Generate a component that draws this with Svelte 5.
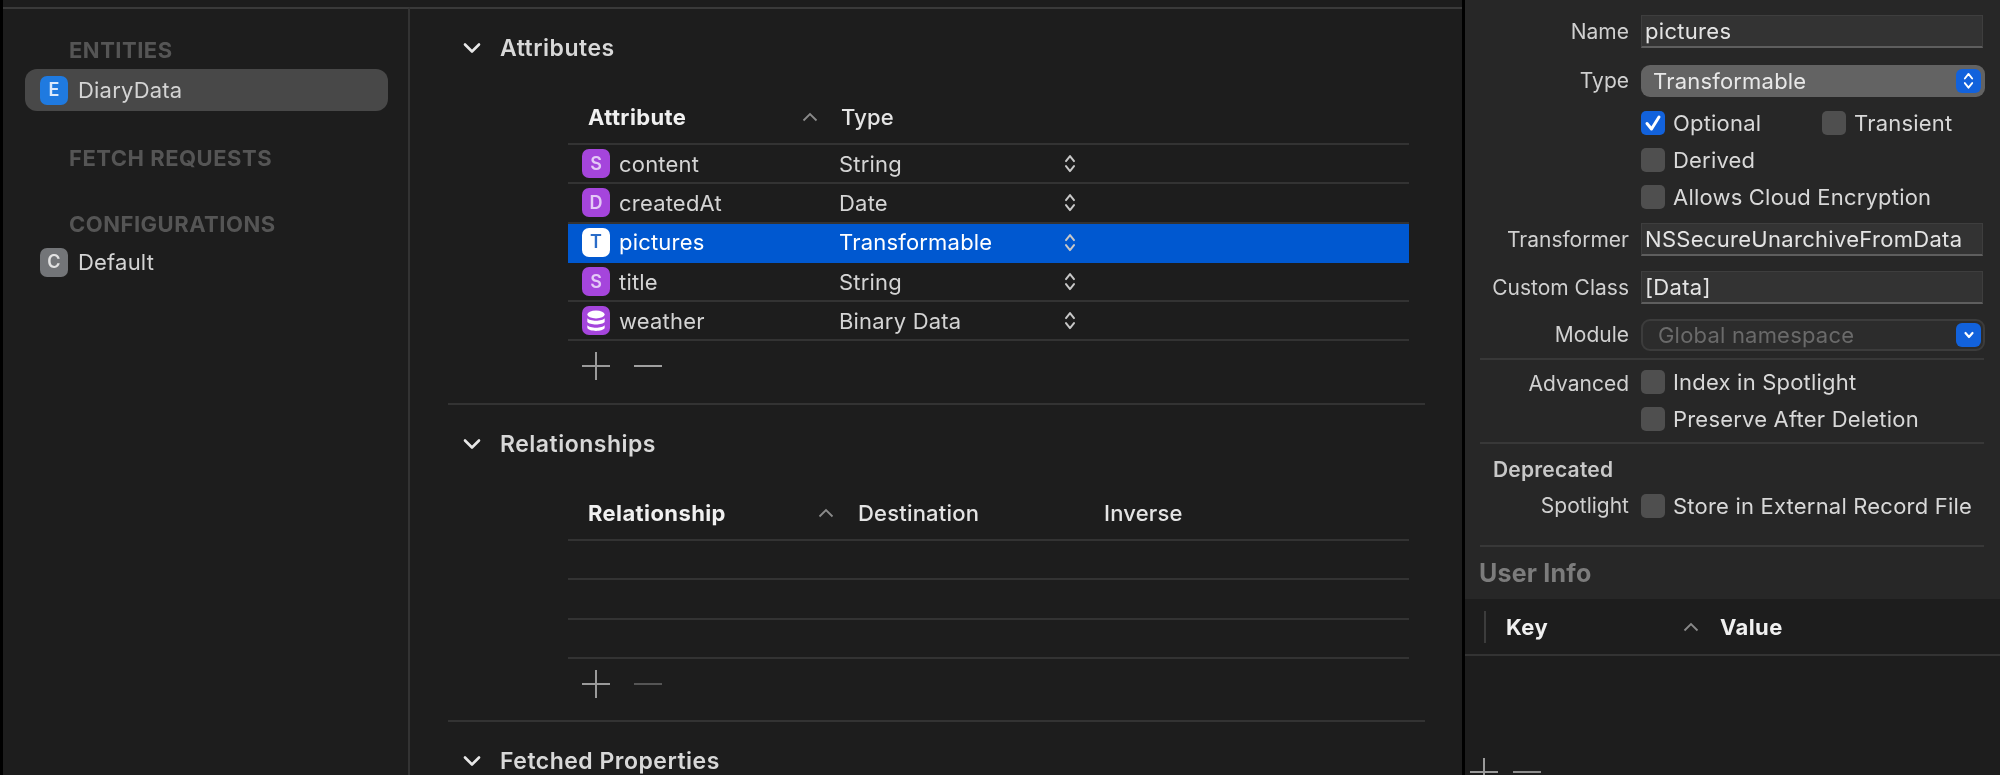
<script>
  const attributes = [
    { letter: 'S', name: 'content', type: 'String' },
    { letter: 'D', name: 'createdAt', type: 'Date' },
    { letter: 'T', name: 'pictures', type: 'Transformable', selected: true },
    { letter: 'S', name: 'title', type: 'String' },
    { letter: 'db', name: 'weather', type: 'Binary Data' }
  ];
</script>

{#snippet chevron()}
  <svg class="chevron" width="18" height="12" viewBox="0 0 18 12">
    <path d="M2 2.5 L9 9.5 L16 2.5" fill="none" stroke="#e8e8e8" stroke-width="2.6" stroke-linecap="round" stroke-linejoin="round" />
  </svg>
{/snippet}

{#snippet caret()}
  <svg width="16" height="10" viewBox="0 0 16 10">
    <path d="M1.5 8.5 L8 2 L14.5 8.5" fill="none" stroke="#8a8a8a" stroke-width="1.8" />
  </svg>
{/snippet}

{#snippet stepper(color = '#c8c8c8', size = 12)}
  <svg class="stepper" width={size} height={size * 1.6} viewBox="0 0 12 19">
    <path d="M2 7 L6 2 L10 7 M2 12 L6 17 L10 12" fill="none" stroke={color} stroke-width="2" stroke-linecap="round" stroke-linejoin="round" />
  </svg>
{/snippet}

{#snippet plusMinus(minusColor = '#8d8d8d')}
  <div class="plusminus">
    <svg width="28" height="28" viewBox="0 0 28 28">
      <path d="M0 14 H28 M14 0 V28" stroke="#9a9a9a" stroke-width="2" />
    </svg>
    <svg width="28" height="28" viewBox="0 0 28 28">
      <path d="M0 14 H28" stroke={minusColor} stroke-width="2" />
    </svg>
  </div>
{/snippet}

{#snippet checkbox(label, checked = false)}
  <div class="check">
    <span class="box" class:on={checked}>
      {#if checked}
        <svg width="24" height="24" viewBox="0 0 24 24">
          <path d="M6 12.5 L10.5 18 L18 6" fill="none" stroke="#fff" stroke-width="3" stroke-linecap="round" stroke-linejoin="round" />
        </svg>
      {/if}
    </span>
    <span>{label}</span>
  </div>
{/snippet}

<div class="window">
  <aside class="sidebar">
    <h3 class="group first">ENTITIES</h3>
    <div class="item active"><span class="badge blue">E</span>DiaryData</div>
    <h3 class="group fetch">FETCH REQUESTS</h3>
    <h3 class="group conf">CONFIGURATIONS</h3>
    <div class="item"><span class="badge grey">C</span>Default</div>
  </aside>

  <main class="editor">
    <section class="sec">
      <div class="sec-title">{@render chevron()}Attributes</div>
      <div class="table">
        <div class="head attr-cols">
          <span class="strong">Attribute</span>
          <span class="caret">{@render caret()}</span>
          <span>Type</span>
        </div>
        {#each attributes as a}
          <div class="row attr-cols" class:selected={a.selected}>
            <span class="cell-name">
              <span class="badge purple">
                {#if a.letter === 'db'}
                  <svg width="22" height="26" viewBox="0 0 20 24">
                    <ellipse cx="10" cy="6" rx="8" ry="3.6" fill="#fff" />
                    <path d="M2 9.5 C4 12.5 16 12.5 18 9.5 V13 C16 16 4 16 2 13 Z M2 16 C4 19 16 19 18 16 V18.5 C16 22 4 22 2 18.5 Z" fill="#fff" />
                  </svg>
                {:else}
                  {a.letter}
                {/if}
              </span>
              {a.name}
            </span>
            <span></span>
            <span class="cell-type">{a.type}{@render stepper()}</span>
          </div>
        {/each}
        {@render plusMinus('#a0a0a0')}
      </div>
    </section>

    <section class="sec">
      <div class="sec-title">{@render chevron()}Relationships</div>
      <div class="table">
        <div class="head rel-cols">
          <span class="strong">Relationship</span>
          <span class="caret">{@render caret()}</span>
          <span>Destination</span>
          <span>Inverse</span>
        </div>
        <div class="row"></div>
        <div class="row"></div>
        <div class="row"></div>
        {@render plusMinus('#555')}
      </div>
    </section>

    <section class="sec last">
      <div class="sec-title">{@render chevron()}Fetched Properties</div>
    </section>
  </main>

  <aside class="inspector">
    <div class="form">
      <div class="line name-line"><label for="n">Name</label><div id="n" class="field">pictures</div></div>
      <div class="line type-line">
        <span class="lab">Type</span>
        <div class="popup">Transformable<span class="popbtn">{@render stepper('#fff', 11)}</span></div>
      </div>
      <div class="line opts">
        <span class="lab"></span>
        <div class="checks">
          <div class="two">
            {@render checkbox('Optional', true)}
            {@render checkbox('Transient')}
          </div>
          {@render checkbox('Derived')}
          {@render checkbox('Allows Cloud Encryption')}
        </div>
      </div>
      <div class="line tf"><span class="lab">Transformer</span><div class="field">NSSecureUnarchiveFromData</div></div>
      <div class="line cc"><span class="lab">Custom Class</span><div class="field">[Data]</div></div>
      <div class="line mod">
        <span class="lab">Module</span>
        <div class="popup off">Global namespace
          <span class="popbtn">
            <svg width="12" height="10" viewBox="0 0 12 10"><path d="M2.5 3 L6 7 L9.5 3" fill="none" stroke="#fff" stroke-width="2.2" stroke-linecap="round" stroke-linejoin="round" /></svg>
          </span>
        </div>
      </div>
    </div>

    <div class="rule rule-a"></div>
    <div class="line adv">
      <span class="lab">Advanced</span>
      <div class="checks">
        {@render checkbox('Index in Spotlight')}
        {@render checkbox('Preserve After Deletion')}
      </div>
    </div>
    <div class="rule rule-b"></div>
    <div class="depr">Deprecated</div>
    <div class="line spot">
      <span class="lab">Spotlight</span>
      {@render checkbox('Store in External Record File')}
    </div>
    <div class="rule rule-c"></div>
    <div class="userinfo">User Info</div>

    <div class="kv">
      <div class="kv-head">
        <span class="kv-bar"></span>
        <span class="strong key">Key</span>
        <span class="caret">{@render caret()}</span>
        <span class="strong">Value</span>
      </div>
      <div class="kv-tools">
        <svg width="28" height="28" viewBox="0 0 28 28"><path d="M0 14 H28 M14 0 V28" stroke="#9a9a9a" stroke-width="2" /></svg>
        <svg width="28" height="28" viewBox="0 0 28 28"><path d="M0 14 H28" stroke="#8d8d8d" stroke-width="2" /></svg>
      </div>
    </div>
  </aside>
</div>

<style>
  :global(body) {
    margin: 0;
    background: #1d1d1d;
  }

  .window {
    display: flex;
    width: 2000px;
    height: 775px;
    overflow: hidden;
    box-sizing: border-box;
    border-left: 3px solid #000;
    background: #1d1d1d;
    color: #d4d4d4;
    font-family: Inter, "Liberation Sans", sans-serif;
    font-size: 22px;
    letter-spacing: 0.2px;
    line-height: 28px;
    filter: blur(0.4px);
  }

  .sidebar {
    width: 407px;
    flex: none;
    box-sizing: border-box;
    border-top: 2px solid #3a3a3a;
    margin-top: 7px;
    border-right: 2px solid #333;
    padding: 0 20px 0 22px;
  }

  .group {
    margin: 0 0 0 44px;
    font-size: 22px;
    letter-spacing: 0.5px;
    line-height: 28px;
    font-weight: 700;
    color: #555;
  }
  .first { margin-top: 27px; }
  .fetch { margin-top: 33px; }
  .conf { margin-top: 38px; }
  .conf + .item { margin-top: 3px; }

  .item {
    display: flex;
    align-items: center;
    gap: 10px;
    height: 42px;
    padding-left: 15px;
    border-radius: 12px;
  }
  .item.active {
    background: #484848;
    margin-top: 5px;
  }

  .badge {
    display: flex;
    align-items: center;
    justify-content: center;
    width: 28px;
    height: 29px;
    flex: none;
    border-radius: 7px;
    font-size: 18px;
    font-weight: 600;
    letter-spacing: 0;
  }
  .blue { background: #1f7ae0; color: #dbe9fb; }
  .grey { background: #737578; color: #e2e2e2; }
  .purple { background: #a545dc; color: #e4c9f6; }

  .editor {
    width: 1054px;
    flex: none;
    box-sizing: border-box;
    border-top: 2px solid #3a3a3a;
    margin-top: 7px;
    padding: 0 39px 0 38px;
  }

  .sec {
    border-bottom: 2px solid #333;
    height: 317px;
    box-sizing: border-box;
    padding-top: 1px;
  }
  .sec:first-child {
    height: 396px;
    padding-top: 25px;
  }
  .sec.last { border: 0; }

  .sec-title {
    display: flex;
    align-items: center;
    gap: 19px;
    height: 28px;
    margin-top: 24px;
    padding-left: 15px;
    font-size: 23px;
    letter-spacing: 0.5px;
    font-weight: 600;
    color: #d8d8d8;
  }
  .sec:first-child .sec-title { margin-top: 0; }

  .table {
    margin: 39px 16px 0 120px;
  }
  .head {
    height: 42px;
    box-sizing: content-box;
    border-bottom: 2px solid #333;
    color: #e4e4e4;
    font-weight: 500;
  }
  .head > span {
    padding-bottom: 10px;
  }
  .strong {
    font-weight: 700;
    color: #f0f0f0;
    letter-spacing: 0.4px;
  }

  .attr-cols {
    display: grid;
    grid-template-columns: 237px 34px 1fr;
    align-items: center;
  }
  .head.attr-cols { padding-left: 20px; grid-template-columns: 214px 39px 1fr; }
  .rel-cols {
    display: grid;
    grid-template-columns: 230px 40px 246px 1fr;
    align-items: center;
    padding-left: 20px;
  }

  .row {
    height: 37.3px;
    border-bottom: 2px solid #333;
  }
  .row.selected {
    background: #0058d0;
    border-bottom-color: #0058d0;
    color: #fff;
  }
  .row.selected .badge {
    background: #fff;
    color: #2a6cc8;
  }

  .cell-name {
    display: flex;
    align-items: center;
    gap: 9px;
    padding-left: 14px;
  }
  .cell-type {
    display: flex;
    align-items: center;
    justify-content: space-between;
    width: 237px;
  }

  .caret {
    display: flex;
    align-items: center;
    justify-content: flex-start;
  }

  .plusminus {
    display: flex;
    gap: 24px;
    padding: 11px 0 0 14px;
  }

  .inspector {
    flex: 1;
    background: #272727;
    border-left: 3px solid #000;
    margin-left: -2px;
    display: flex;
    flex-direction: column;
    color: #d8d8d8;
    min-width: 0;
    overflow: hidden;
  }
  .inspector > * {
    flex: none;
  }

  .form {
    padding-top: 15px;
  }

  .line {
    display: flex;
    padding-right: 15px;
    align-items: center;
  }
  .lab, label {
    width: 164px;
    flex: none;
    margin-right: 12px;
    text-align: right;
    font-size: 21px;
    letter-spacing: 0;
    color: #d0d0d0;
  }

  .field {
    flex: 1;
    height: 33px;
    box-sizing: border-box;
    background: #333;
    border: 1px solid #3e3e3e;
    border-bottom: 2px solid #5e5e5e;
    padding-left: 3px;
    line-height: 31px;
    letter-spacing: 0.3px;
    color: #e4e4e4;
    margin-right: 2px;
  }

  .popup {
    flex: 1;
    display: flex;
    justify-content: space-between;
    align-items: center;
    height: 32px;
    box-sizing: border-box;
    background: #636363;
    border-radius: 9px;
    padding: 0 4px 0 12px;
    color: #e8e8e8;
  }
  .popup.off {
    background: #2c2c2c;
    border: 2px solid #3c3c3c;
    color: #6a6a6a;
    padding: 0 2px 0 15px;
  }
  .popbtn {
    display: flex;
    align-items: center;
    justify-content: center;
    width: 25px;
    height: 24px;
    background: #1262dc;
    border-radius: 6px;
  }

  .type-line { margin-top: 17px; }
  .opts { margin-top: 14px; align-items: flex-start; }
  .tf { margin-top: 14px; }
  .cc { margin-top: 15px; }
  .mod { margin-top: 15px; }
  .adv { margin-top: 10px; align-items: flex-start; }
  .spot { margin-top: 8px; }

  .checks {
    display: flex;
    flex-direction: column;
    gap: 13px;
  }
  .two {
    display: flex;
    gap: 0;
  }
  .two > :global(.check:first-child) {
    width: 181px;
  }

  .check {
    display: flex;
    align-items: center;
    gap: 8px;
    height: 24px;
    white-space: nowrap;
  }
  .box {
    width: 24px;
    height: 24px;
    flex: none;
    border-radius: 5px;
    background: #4f4f4f;
  }
  .box.on {
    background: #1262dc;
  }
  .box svg {
    display: block;
  }

  .rule {
    height: 2px;
    background: #383838;
    margin: 0 16px 0 15px;
    flex: none;
  }
  .rule-a { margin-top: 7px; }
  .rule-b { margin-top: 11px; }
  .rule-c { margin-top: 25px; }

  .depr {
    margin: 12px 0 0 28px;
    font-weight: 600;
    color: #c8c8c8;
    height: 28px;
    font-size: 21px;
  }

  .userinfo {
    margin: 12px 0 0 14px;
    font-size: 25px;
    font-weight: 700;
    color: #7c7c7c;
    height: 40px;
    line-height: 28px;
  }

  .kv {
    flex: 1 0 auto !important;
    background: #1d1d1d;
  }
  .kv-head {
    display: flex;
    align-items: center;
    height: 55px;
    border-bottom: 2px solid #333;
  }
  .kv-bar {
    width: 2px;
    height: 32px;
    background: #3c3c3c;
    margin: 0 20px 0 19px;
  }
  .key {
    width: 170px;
  }
  .kv-head .caret {
    width: 30px;
    justify-content: center;
  }
  .kv-head .caret + .strong {
    margin-left: 14px;
  }

  .kv-tools {
    display: flex;
    gap: 15px;
    padding: 102px 0 0 5px;
  }
</style>
